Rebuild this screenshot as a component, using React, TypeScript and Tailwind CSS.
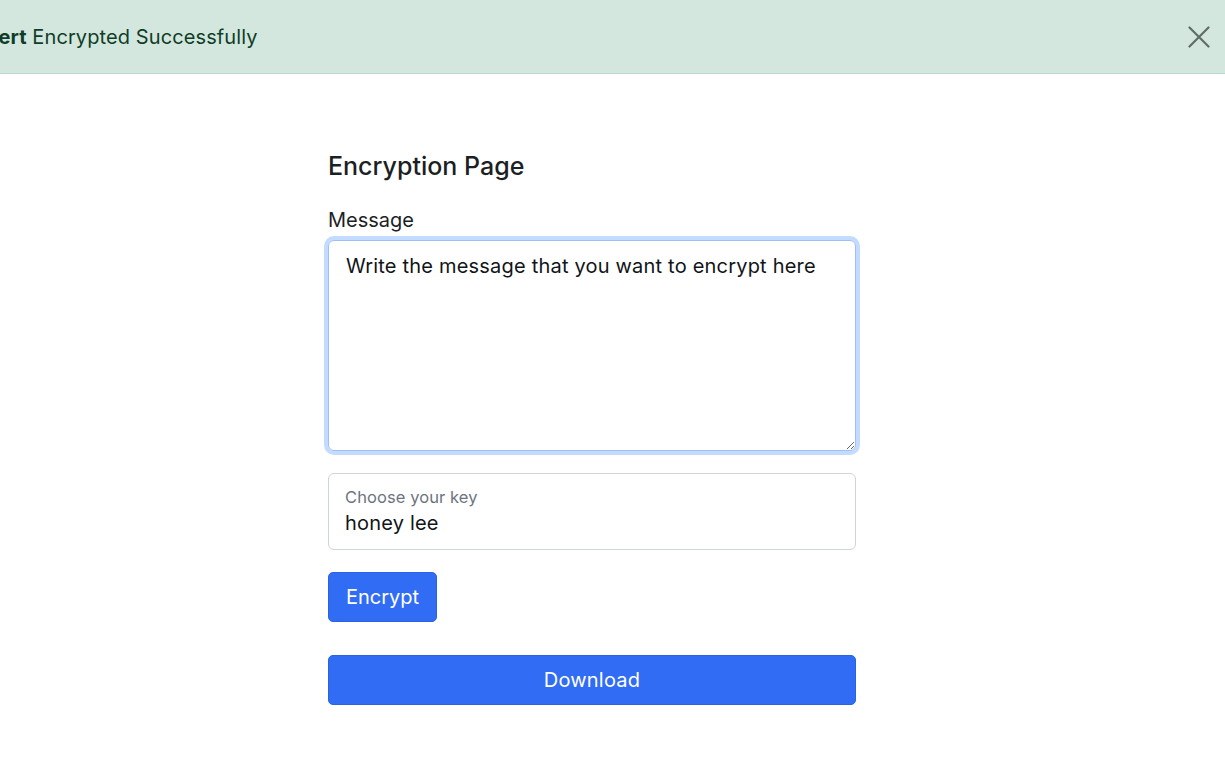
import React, { useState } from 'react';

export default function App() {
  const [message, setMessage] = useState('Write the message that you want to encrypt here');
  const [key, setKey] = useState('honey lee');
  const [showAlert, setShowAlert] = useState(true);

  return (
    <div className="min-h-screen w-full bg-white" style={{ fontFamily: 'Inter, "Noto Sans", sans-serif' }}>
      {/* 提示条 */}
      {showAlert && (
        <div className="relative flex h-[74px] w-full items-center overflow-hidden border-b border-[#badbcc] bg-[#d4e7df] text-[#0f3d26]">
          <p className="-ml-[22px] whitespace-nowrap text-[20px] leading-[30px] tracking-[0.005em]">
            <strong className="font-bold">Alert</strong> Encrypted Successfully
          </p>
          <button
            type="button"
            onClick={() => setShowAlert(false)}
            className="absolute right-[13px] top-[24px] flex h-[26px] w-[26px] items-center justify-center text-[#5f6d67]"
          >
            <svg width="22" height="22" viewBox="0 0 22 22" fill="none" stroke="currentColor" strokeWidth="2.2" strokeLinecap="round">
              <path d="M1.5 1.5 L20.5 20.5 M20.5 1.5 L1.5 20.5" />
            </svg>
          </button>
        </div>
      )}

      {/* 表单 */}
      <div className="flex w-[528px] flex-col pt-[77px]" style={{ marginLeft: 328 }}>
        <h5 className="text-[25px] font-medium leading-[30px] text-[#1c1f23]">Encryption Page</h5>

        <label className="mt-[24px] text-[20px] leading-[30px] text-[#1c1f23]">Message</label>
        <textarea
          value={message}
          onChange={(e) => setMessage(e.target.value)}
          className="mt-[5px] h-[211px] w-full rounded-[6px] border border-[#9fbdf6] px-[17px] py-[10px] text-[20px] leading-[30px] tracking-[0.01em] text-[#111418] shadow-[0_0_0_4px_rgba(13,110,253,0.25)] outline-none"
        />

        <div className="relative mt-[22px] h-[77px] w-full rounded-[6px] border border-[#ced4da]">
          <span className="absolute left-[16px] top-[12px] text-[16.5px] leading-[22px] tracking-[0.005em] text-[#6c757d]">Choose your key</span>
          <input
            value={key}
            onChange={(e) => setKey(e.target.value)}
            className="h-full w-full rounded-[6px] bg-transparent px-[16px] pt-[34px] pb-[12px] text-[20px] leading-[28px] tracking-[0.01em] text-[#111418] outline-none"
          />
        </div>

        <div className="mt-[22px]">
          <button
            type="button"
            className="h-[50px] rounded-[5px] border border-[#2a62e6] bg-[#316cf4] px-[17px] text-[20px] text-white"
          >
            Encrypt
          </button>
        </div>

        <button
          type="button"
          className="mt-[33px] h-[50px] w-full rounded-[5px] border border-[#2a62e6] bg-[#316cf4] text-[20px] tracking-[0.01em] text-white"
        >
          Download
        </button>
      </div>
    </div>
  );
}
